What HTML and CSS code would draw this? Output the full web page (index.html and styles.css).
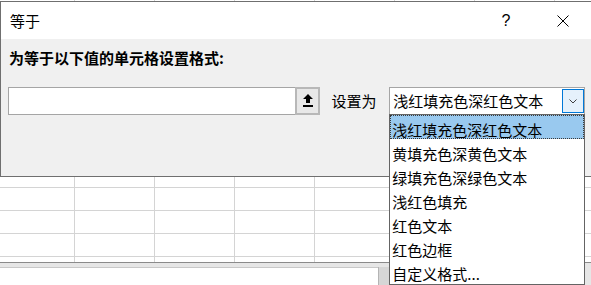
FILE: index.html
```html
<!DOCTYPE html>
<html lang="zh-CN">
<head>
    <meta charset="UTF-8">
    <title>等于</title>
    <link rel="stylesheet" href="styles.css">
</head>
<body>
    <div class="sheet">
        <div class="cells"></div>
        <div class="sheet-bar">
            <div class="tab-strip"></div>
            <div class="scroll-corner"></div>
        </div>
    </div>

    <div class="dialog">
        <div class="titlebar">
            <span class="title">等于</span>
            <span class="title-btn help">?</span>
            <span class="title-btn close">
                <svg width="12" height="12" viewBox="0 0 12 12"><path d="M0.5 0.5 L11.5 11.5 M11.5 0.5 L0.5 11.5" stroke="#000" stroke-width="1" fill="none"/></svg>
            </span>
        </div>
        <div class="dialog-body">
            <div class="prompt">为等于以下值的单元格设置格式:</div>
            <div class="value-row">
                <div class="ref-input">
                    <div class="ref-field"></div>
                    <div class="ref-btn">
                        <svg width="10" height="14" viewBox="0 0 10 14"><polygon points="5,0 10,5 7,5 7,9 3,9 3,5 0,5" fill="#000"/><rect x="0" y="11" width="10" height="2" fill="#000"/></svg>
                    </div>
                </div>
                <span class="set-label">设置为</span>
                <div class="combo">
                    <span class="combo-text">浅红填充色深红色文本</span>
                    <span class="combo-btn">
                        <svg width="8" height="5" viewBox="0 0 8 5"><polyline points="0.5,0.5 4,4 7.5,0.5" stroke="#404040" stroke-width="1" fill="none"/></svg>
                    </span>
                    <ul class="combo-list">
                        <li class="active">浅红填充色深红色文本</li>
                        <li>黄填充色深黄色文本</li>
                        <li>绿填充色深绿色文本</li>
                        <li>浅红色填充</li>
                        <li>红色文本</li>
                        <li>红色边框</li>
                        <li>自定义格式...</li>
                    </ul>
                </div>
            </div>
        </div>
    </div>
</body>
</html>
```

FILE: styles.css
```css
body {
    margin: 0;
    width: 591px;
    height: 285px;
    overflow: hidden;
    position: relative;
    font-family: "Noto Sans CJK SC", sans-serif;
    font-size: 15px;
    color: #000;
    background: #fff;
}
.sheet {
    height: 285px;
    display: flex;
    flex-direction: column;
}
.cells {
    height: 262px;
    background-color: #fff;
    background-image:
        repeating-linear-gradient(to right, transparent 0 74px, #d4d4d4 74px 75px, transparent 75px 80px),
        repeating-linear-gradient(to bottom, transparent 0 3px, #d4d4d4 3px 4px, transparent 4px 23px);
}
.sheet-bar {
    flex: 1;
    display: flex;
    box-sizing: border-box;
    border-top: 1px solid #8a8a8a;
    background: #e6e6e6;
    padding-top: 4px;
}
.tab-strip {
    width: 378px;
    background: #fff;
    border-top: 1px solid #c8c8c8;
}
.scroll-corner {
    width: 12px;
    background: #d6d6d6;
    border-left: 1px solid #b4b4b4;
}
.dialog {
    position: absolute;
    top: 1px;
    left: 0;
    width: 593px;
    height: 176px;
    box-sizing: border-box;
    border: 1px solid #6f6f6f;
    display: flex;
    flex-direction: column;
}
.titlebar {
    height: 37px;
    background: #fff;
    display: flex;
    align-items: center;
    padding-right: 6px;
}
.title {
    flex: 1;
    padding-left: 9px;
    line-height: 20px;
}
.title-btn {
    display: flex;
    align-items: center;
    justify-content: center;
    height: 37px;
}
.help {
    width: 30px;
    margin-right: 19px;
    font-family: "Liberation Sans", sans-serif;
    font-size: 16px;
}
.close {
    width: 46px;
}
.dialog-body {
    flex: 1;
    background: #f0f0f0;
    padding: 9px 7px 0;
}
.prompt {
    font-weight: bold;
    line-height: 20px;
    padding-left: 1px;
    margin-bottom: 19px;
}
.value-row {
    display: flex;
    align-items: center;
    height: 28px;
}
.ref-input {
    width: 313px;
    height: 28px;
    display: flex;
}
.ref-field {
    flex: 1;
    background: #fff;
    border: 1px solid #a5a5a5;
    border-right: none;
}
.ref-btn {
    width: 25px;
    box-sizing: border-box;
    border: 2px solid #b8b8b8;
    background: #e8e8e8;
    display: flex;
    align-items: center;
    justify-content: center;
}
.set-label {
    margin-left: 11px;
    width: 58px;
    line-height: 20px;
}
.combo {
    position: relative;
    width: 196px;
    height: 28px;
    box-sizing: border-box;
    border: 1px solid #a5a5a5;
    background: #fff;
    display: flex;
    align-items: center;
}
.combo-text {
    flex: 1;
    padding-left: 3px;
    line-height: 20px;
}
.combo-btn {
    width: 22px;
    height: 24px;
    box-sizing: border-box;
    border: 1px solid #0078d7;
    background: #e5f1fb;
    display: flex;
    align-items: center;
    justify-content: center;
}
.combo-list {
    position: absolute;
    top: 26px;
    left: -1px;
    width: 196px;
    height: 171px;
    box-sizing: border-box;
    margin: 0;
    padding: 0;
    list-style: none;
    background: #fff;
    border: 1px solid #646464;
}
.combo-list li {
    height: 24px;
    box-sizing: border-box;
    padding: 5px 0 0 2px;
    line-height: 19px;
    white-space: nowrap;
}
.combo-list li.active {
    background: #99c9ef;
    border: 1px dotted #3a3a3a;
    padding: 4px 0 0 1px;
}
```
